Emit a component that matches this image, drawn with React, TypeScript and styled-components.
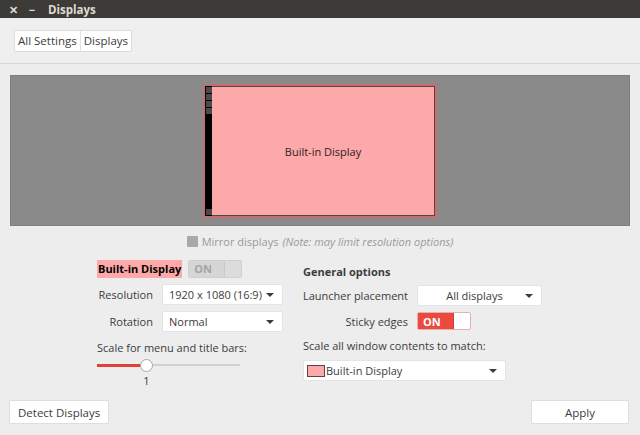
import React from 'react';
import styled, { createGlobalStyle } from 'styled-components';

const GlobalStyle = createGlobalStyle`
  html, body {
    margin: 0;
    padding: 0;
    background: #ededed;
    font-family: "Open Sans", "Noto Sans", sans-serif;
    font-size: 11px;
    color: #3c3c3c;
  }
`;

const Window = styled.div`
  width: 640px;
  height: 435px;
  display: flex;
  flex-direction: column;
  overflow: hidden;
`;

const TitleBar = styled.div`
  height: 18px;
  background: #3c3b37;
  color: #dfdbd2;
  display: flex;
  align-items: center;
  padding-left: 7px;
  gap: 7px;
  font-size: 11.5px;
  font-weight: 700;
`;

const TitleButton = styled.span`
  width: 12px;
  text-align: center;
  font-size: 11px;
`;

const TitleText = styled.span`
  margin-left: 3px;
`;

const Header = styled.div`
  height: 45px;
  background: #efefef;
  border-bottom: 1px solid #d6d6d6;
  display: flex;
  align-items: center;
  padding-left: 14px;
`;

const Crumbs = styled.div`
  display: flex;
  border: 1px solid #dcdcdc;
  border-radius: 2px;
  background: #fff;
  font-size: 11.5px;
`;

const Crumb = styled.div<{ last?: boolean }>`
  height: 20px;
  padding: 0 3px;
  display: flex;
  align-items: center;
  border-right: ${p => (p.last ? 'none' : '1px solid #e2e2e2')};
`;

const Main = styled.div`
  flex: 1;
  padding: 11px 10px 0 10px;
  display: flex;
  flex-direction: column;
`;

const Stage = styled.div`
  height: 151px;
  background: #8a8a8a;
  border: 1px solid #7e7e7e;
  display: flex;
  justify-content: center;
  padding-top: 8px;
  box-sizing: border-box;
`;

const Monitor = styled.div`
  width: 234px;
  height: 134px;
  box-sizing: border-box;
  border: 2px solid #c46f6f;
  display: flex;
`;

const Launcher = styled.div`
  width: 7px;
  background: #000;
  display: flex;
  flex-direction: column;
  align-items: center;
  gap: 1px;
  padding: 1px 0;
`;

const LauncherIcon = styled.div<{ bottom?: boolean }>`
  width: 6px;
  height: 6px;
  background: #4a4a4a;
  margin-top: ${p => (p.bottom ? 'auto' : '0')};
`;

const Screen = styled.div`
  flex: 1;
  background: #fda9a9;
  border: 1px solid #5a4444;
  border-left: none;
  display: flex;
  align-items: center;
  justify-content: center;
  color: #2d2020;
`;

const MirrorRow = styled.div`
  height: 30px;
  display: flex;
  align-items: center;
  justify-content: center;
  color: #9a9a9a;
  gap: 4px;
`;

const Checkbox = styled.span`
  width: 11px;
  height: 11px;
  background: #a8a8a8;
  border-radius: 1px;
`;

const Note = styled.span`
  font-style: italic;
`;

const Settings = styled.div`
  display: flex;
  padding-left: 87px;
  margin-top: 3px;
  gap: 19px;
`;

const Column = styled.div<{ width: number }>`
  width: ${p => p.width}px;
  display: flex;
  flex-direction: column;
`;

const HeadRow = styled.div`
  height: 19px;
  display: flex;
  align-items: center;
  gap: 6px;
`;

const DisplayLabel = styled.span`
  background: #fda9a9;
  color: #000;
  font-weight: 700;
  height: 18px;
  line-height: 18px;
  padding: 0 1px;
`;

const SectionTitle = styled.div`
  height: 19px;
  display: flex;
  align-items: flex-end;
  font-weight: 700;
  margin-top: 1px;
`;

const Form = styled.div<{ label: number; field: number }>`
  display: grid;
  grid-template-columns: ${p => p.label}px ${p => p.field}px;
  column-gap: 9px;
  row-gap: 6px;
  margin-top: 6px;
  align-items: center;
`;

const Label = styled.span<{ align?: string }>`
  text-align: ${p => p.align || 'left'};
  white-space: nowrap;
`;

const Combo = styled.div<{ center?: boolean }>`
  height: 21px;
  background: #fff;
  border: 1px solid #e4e4e4;
  border-radius: 2px;
  display: flex;
  align-items: center;
  padding: 0 ${p => (p.center ? '16px' : '6px')} 0 6px;
  justify-content: ${p => (p.center ? 'center' : 'flex-start')};
  position: relative;
  box-sizing: border-box;
  white-space: nowrap;
`;

const Arrow = styled.span`
  position: absolute;
  right: 8px;
  top: 8px;
  width: 0;
  height: 0;
  border-left: 4px solid transparent;
  border-right: 4px solid transparent;
  border-top: 4px solid #3c3c3c;
`;

const Switch = styled.div<{ disabled?: boolean }>`
  width: 54px;
  height: 18px;
  box-sizing: border-box;
  border: 1px solid ${p => (p.disabled ? '#cfcfcf' : '#e8b0ad')};
  background: ${p => (p.disabled ? '#dcdcdc' : '#fff')};
  border-radius: 2px;
  display: flex;
`;

const SwitchOn = styled.span<{ disabled?: boolean }>`
  width: 36px;
  display: flex;
  align-items: center;
  padding-left: 5px;
  box-sizing: border-box;
  font-weight: 700;
  font-size: 11px;
  background: ${p => (p.disabled ? '#d6d6d6' : '#ec4a3f')};
  color: ${p => (p.disabled ? '#a4a4a4' : '#fff')};
  border-right: 1px solid ${p => (p.disabled ? '#c8c8c8' : '#d23c32')};
`;

const Caption = styled.div`
  margin-top: 8px;
  height: 16px;
  line-height: 16px;
`;

const Slider = styled.div`
  width: 143px;
  height: 16px;
  position: relative;
  margin-top: 1px;
`;

const Track = styled.div`
  position: absolute;
  left: 0;
  right: 0;
  top: 7px;
  height: 2px;
  background: #d0d0d0;
`;

const Fill = styled.div`
  position: absolute;
  left: 0;
  top: 7px;
  height: 3px;
  background: #e0413a;
`;

const Knob = styled.div`
  position: absolute;
  top: 2px;
  width: 11px;
  height: 11px;
  border-radius: 50%;
  background: #fff;
  border: 1px solid #a8a8a8;
  margin-left: -6px;
`;

const SliderValue = styled.div`
  width: 99px;
  text-align: center;
`;

const ScaleCombo = styled(Combo)`
  width: 203px;
  padding-left: 3px;
  margin-top: 6px;
`;

const Swatch = styled.span`
  width: 16px;
  height: 10px;
  background: #fda9a9;
  border: 1px solid #5a4444;
  margin-right: 1px;
`;

const Footer = styled.div`
  margin-top: auto;
  height: 35px;
  display: flex;
  justify-content: space-between;
  align-items: flex-start;
  padding: 0 1px 0 0;
`;

const Button = styled.button`
  height: 24px;
  background: #fff;
  border: 1px solid #dedede;
  border-radius: 2px;
  font-family: inherit;
  font-size: 11.5px;
  color: #3c3c3c;
  padding: 0 8px;
  margin-left: -1px;
`;

const ApplyButton = styled(Button)`
  width: 98px;
`;

const App = () => {
  const scale = 34;
  return (
    <Window>
      <GlobalStyle />
      <TitleBar>
        <TitleButton>✕</TitleButton>
        <TitleButton>−</TitleButton>
        <TitleText>Displays</TitleText>
      </TitleBar>
      <Header>
        <Crumbs>
          <Crumb>All Settings</Crumb>
          <Crumb last>Displays</Crumb>
        </Crumbs>
      </Header>
      <Main>
        <Stage>
          <Monitor>
            <Launcher>
              <LauncherIcon />
              <LauncherIcon />
              <LauncherIcon />
              <LauncherIcon />
              <LauncherIcon bottom />
            </Launcher>
            <Screen>Built-in Display</Screen>
          </Monitor>
        </Stage>
        <MirrorRow>
          <Checkbox />
          <span>Mirror displays</span>
          <Note>(Note: may limit resolution options)</Note>
        </MirrorRow>
        <Settings>
          <Column width={187}>
            <HeadRow>
              <DisplayLabel>Built-in Display</DisplayLabel>
              <Switch disabled>
                <SwitchOn disabled>ON</SwitchOn>
              </Switch>
            </HeadRow>
            <Form label={56} field={121}>
              <Label align="right">Resolution</Label>
              <Combo>
                1920 x 1080 (16:9)
                <Arrow />
              </Combo>
              <Label align="right">Rotation</Label>
              <Combo>
                Normal
                <Arrow />
              </Combo>
            </Form>
            <Caption>Scale for menu and title bars:</Caption>
            <Slider>
              <Track />
              <Fill style={{ width: `${scale}%` }} />
              <Knob style={{ left: `${scale}%` }} />
            </Slider>
            <SliderValue>1</SliderValue>
          </Column>
          <Column width={240}>
            <SectionTitle>General options</SectionTitle>
            <Form label={105} field={125}>
              <Label>Launcher placement</Label>
              <Combo center>
                All displays
                <Arrow />
              </Combo>
              <Label align="right">Sticky edges</Label>
              <Switch>
                <SwitchOn>ON</SwitchOn>
              </Switch>
            </Form>
            <Caption>Scale all window contents to match:</Caption>
            <ScaleCombo>
              <Swatch />
              Built-in Display
              <Arrow />
            </ScaleCombo>
          </Column>
        </Settings>
        <Footer>
          <Button>Detect Displays</Button>
          <ApplyButton>Apply</ApplyButton>
        </Footer>
      </Main>
    </Window>
  );
};

export default App;
